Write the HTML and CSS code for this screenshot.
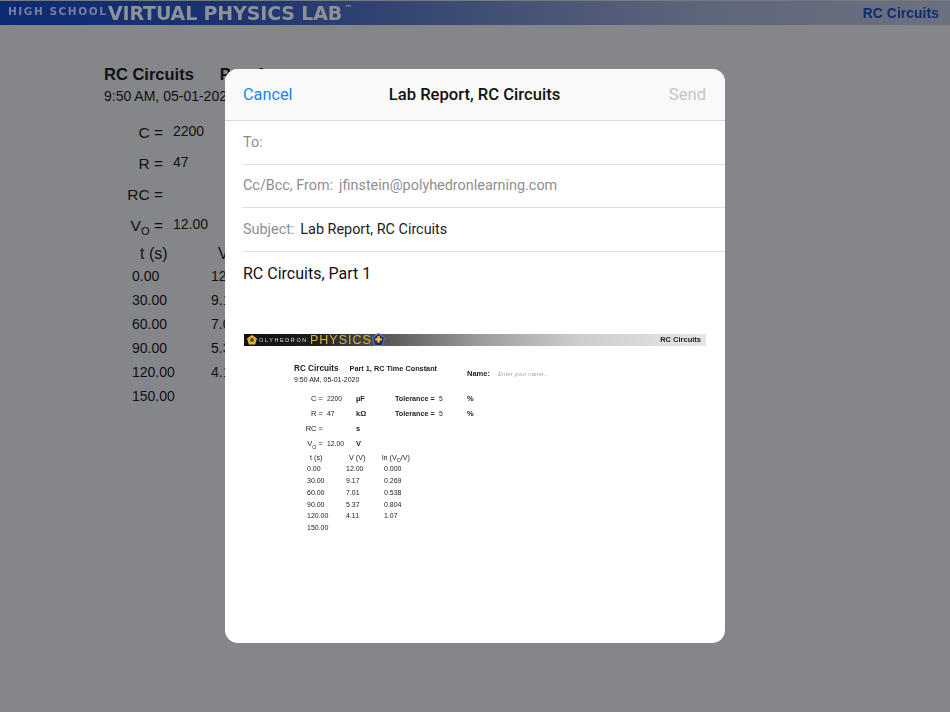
FILE: index.html
```html
<!DOCTYPE html>
<html lang="en">
<head>
  <meta charset="UTF-8" />
  <title>Lab Report, RC Circuits</title>
  <meta name="viewport" content="width=device-width, initial-scale=1.0" />
  <link rel="stylesheet" href="styles.css">
</head>
<body>
  <header class="topbar">
    <div class="brand">
      <span class="brand-small">HIGH SCHOOL</span>
      <span class="brand-big">VIRTUAL PHYSICS LAB</span><span class="brand-tm">™</span>
    </div>
    <div class="topbar-title">RC Circuits</div>
  </header>

  <!-- page behind the sheet -->
  <main class="page">
    <div class="page-title"><span>RC Circuits</span><span class="page-part">Part 1</span></div>
    <div class="page-date">9:50 AM, 05-01-2020</div>
    <div class="fields">
      <div class="f-row"><span class="f-label">C =</span><span class="f-value">2200</span></div>
      <div class="f-row"><span class="f-label">R =</span><span class="f-value">47</span></div>
      <div class="f-row"><span class="f-label">RC =</span><span class="f-value"></span></div>
      <div class="f-row"><span class="f-label">V<sub>O</sub> =</span><span class="f-value">12.00</span></div>
    </div>
    <div class="data">
      <div class="d-head"><span>t (s)</span><span>V (V)</span></div>
      <div class="d-row"><span>0.00</span><span>12.00</span></div>
      <div class="d-row"><span>30.00</span><span>9.17</span></div>
      <div class="d-row"><span>60.00</span><span>7.01</span></div>
      <div class="d-row"><span>90.00</span><span>5.37</span></div>
      <div class="d-row"><span>120.00</span><span>4.11</span></div>
      <div class="d-row"><span>150.00</span><span></span></div>
    </div>
  </main>

  <section class="sheet">
    <div class="nav">
      <span class="nav-side nav-cancel">Cancel</span>
      <span class="nav-title">Lab Report, RC Circuits</span>
      <span class="nav-side nav-send">Send</span>
    </div>
    <div class="mail-row"><span class="mail-label">To:</span></div>
    <div class="mail-row"><span class="mail-label">Cc/Bcc, From:</span><span>jfinstein@polyhedronlearning.com</span></div>
    <div class="mail-row"><span class="mail-label">Subject:</span><span class="mail-subject">Lab Report, RC Circuits</span></div>
    <div class="mail-body">RC Circuits, Part 1</div>

    <div class="banner">
      <svg class="banner-logo" width="10" height="10" viewBox="0 0 10 10"><polygon points="5,0 10,3.6 8.1,9.5 1.9,9.5 0,3.6" fill="#e3b23c"/><circle cx="5" cy="5" r="2" fill="#5b4413"/></svg>
      <span class="banner-poly">OLYHEDRON</span>
      <span class="banner-physics">PHYSICS</span>
      <svg class="banner-plus" width="13" height="13" viewBox="0 0 12 12"><polygon points="6,0.5 11.5,4.5 9.5,11.5 2.5,11.5 0.5,4.5" fill="#1d2a55" stroke="#5a78c8" stroke-width="1"/><path d="M6 2.8v6.2M2.9 5.9h6.2" stroke="#f2c230" stroke-width="2.2"/></svg>
      <span class="banner-title">RC Circuits</span>
    </div>

    <div class="mini">
      <div class="mini-head">
        <div class="mini-heading">
          <div class="mini-title"><b class="mini-name">RC Circuits</b><b>Part 1, RC Time Constant</b></div>
          <div class="mini-date">9:50 AM, 05-01-2020</div>
        </div>
        <div class="mini-student"><b>Name:</b><i>Enter your name...</i></div>
      </div>

      <div class="mini-fields">
        <span class="m-label">C =</span><span class="m-value">2200</span><span class="m-unit">µF</span><span class="m-tol">Tolerance =</span><span class="m-value">5</span><span class="m-unit">%</span>
        <span class="m-label">R =</span><span class="m-value">47</span><span class="m-unit">kΩ</span><span class="m-tol">Tolerance =</span><span class="m-value">5</span><span class="m-unit">%</span>
        <span class="m-label">RC =</span><span class="m-value"></span><span class="m-unit">s</span><span></span><span></span><span></span>
        <span class="m-label">V<sub>O</sub> =</span><span class="m-value">12.00</span><span class="m-unit">V</span><span></span><span></span><span></span>
      </div>

      <div class="mini-table">
        <b class="m-th">t (s)</b><b class="m-th">V (V)</b><b class="m-th m-th-ln">ln (V<sub>O</sub>/V)</b>
        <span>0.00</span><span>12.00</span><span>0.000</span>
        <span>30.00</span><span>9.17</span><span>0.269</span>
        <span>60.00</span><span>7.01</span><span>0.538</span>
        <span>90.00</span><span>5.37</span><span>0.804</span>
        <span>120.00</span><span>4.11</span><span>1.07</span>
        <span>150.00</span><span></span><span></span>
      </div>
    </div>
  </section>
</body>
</html>
```

FILE: styles.css
```css
html, body {
  margin: 0;
  padding: 0;
}
body {
  width: 950px;
  height: 712px;
  overflow: hidden;
  position: relative;
  background: #85868a;
  color: #111;
  font-family: "Liberation Sans", Arial, sans-serif;
}
sub {
  font-size: 0.72em;
  line-height: 0;
}

/* top bar */
.topbar {
  height: 25px;
  box-sizing: border-box;
  display: flex;
  justify-content: space-between;
  align-items: center;
  padding: 0 11px 0 8px;
  background: linear-gradient(90deg, #0d2a72 0%, #1c3470 25%, #3f4e74 50%, #5f677c 75%, #6c7180 100%);
  border-top: 1px solid #77797e;
}
.brand {
  display: flex;
  align-items: center;
  white-space: nowrap;
  color: #8e9197;
  font-family: "DejaVu Sans", sans-serif;
  font-weight: bold;
  filter: blur(0.3px);
}
.brand-small {
  font-size: 10.5px;
  letter-spacing: 1.55px;
  margin-top: -4px;
  color: #76809c;
  width: 100px;
}
.brand-big {
  font-size: 19px;
  letter-spacing: -0.15px;
  width: 237px;
}
.brand-tm {
  font-size: 7px;
  margin-top: -10px;
}
.topbar-title {
  font-size: 13.8px;
  font-weight: bold;
  color: #0e2b70;
  letter-spacing: 0.1px;
  filter: blur(0.2px);
}

/* page behind */
.page {
  padding: 39px 0 0 104px;
}
.page-title {
  display: flex;
  gap: 26px;
  font-size: 16.5px;
  line-height: 20px;
  font-weight: bold;
}
.page-date {
  font-size: 14px;
  line-height: 16px;
  margin-top: 4px;
}
.fields {
  margin-top: 16px;
}
.f-row {
  display: flex;
  height: 31px;
  align-items: flex-start;
}
.f-label {
  width: 59px;
  text-align: right;
  font-size: 15.5px;
  line-height: 24px;
  margin-top: 1px;
}
.f-value {
  margin-left: 10px;
  font-size: 14px;
  line-height: 20px;
  padding-top: 1px;
}
.data {
  margin-left: 28px;
  margin-top: 0;
}
.d-head, .d-row {
  display: grid;
  grid-template-columns: 79px 60px;
}
.d-head {
  font-size: 16px;
  line-height: 20px;
}
.d-head span:first-child {
  padding-left: 8px;
}
.d-head span:last-child {
  padding-left: 7px;
  white-space: nowrap;
}
.d-row {
  font-size: 14px;
  height: 24px;
  line-height: 24px;
}

/* mail sheet */
.sheet {
  position: absolute;
  left: 225px;
  top: 69px;
  width: 500px;
  height: 574px;
  background: #fff;
  border-radius: 13px;
  overflow: hidden;
  font-family: Roboto, "Liberation Sans", sans-serif;
}
.nav {
  height: 52px;
  box-sizing: border-box;
  display: flex;
  align-items: center;
  padding: 0 19px 0 18px;
  background: #f9f9f9;
  border-bottom: 1px solid #d8d8da;
  font-size: 16.6px;
}
.nav-side {
  flex: 1;
}
.nav-cancel {
  color: #1a82fb;
  font-size: 16.3px;
}
.nav-title {
  font-weight: 500;
  color: #111;
}
.nav-send {
  color: #c4c4c6;
  text-align: right;
}
.mail-row {
  height: 43.5px;
  box-sizing: border-box;
  display: flex;
  align-items: center;
  gap: 6px;
  margin-left: 18px;
  border-bottom: 1px solid #dcdcde;
  font-size: 14.4px;
  color: #8e8e92;
}
.mail-subject {
  color: #222;
}
.mail-body {
  margin: 12px 0 0 18px;
  font-size: 16px;
  line-height: 20px;
  color: #111;
}

/* pdf preview */
.banner {
  display: flex;
  align-items: center;
  height: 12px;
  margin: 50px 19px 0 19px;
  padding-left: 3px;
  background: linear-gradient(90deg, #111 0%, #1c1c1c 15%, #555 30%, #999 50%, #ccc 72%, #e6e6e6 100%);
  font-family: "Liberation Sans", sans-serif;
  filter: blur(0.3px);
}
.banner-poly {
  margin-left: 2px;
  font-size: 5.5px;
  letter-spacing: 1.6px;
  color: #ddd;
  width: 51px;
}
.banner-physics {
  font-size: 12.5px;
  letter-spacing: 1px;
  color: #d9b23f;
  margin-right: 2px;
  width: 60px;
}
.banner-title {
  margin-left: auto;
  margin-right: 5px;
  font-size: 7.5px;
  font-weight: bold;
  color: #222;
}
.mini {
  padding: 18px 0 0 69px;
  font-family: "Liberation Sans", sans-serif;
  font-size: 7px;
  color: #222;
  filter: blur(0.25px);
}
.mini-head {
  display: flex;
}
.mini-heading {
  width: 173px;
}
.mini-title {
  display: flex;
  gap: 11px;
  align-items: baseline;
  font-size: 7.3px;
  line-height: 10px;
}
.mini-name {
  font-size: 8.2px;
}
.mini-date {
  margin-top: 1px;
  line-height: 10px;
  font-size: 7px;
}
.mini-student {
  display: flex;
  gap: 8px;
  align-items: baseline;
  padding-top: 5px;
  font-size: 7.5px;
}
.mini-student i {
  font-size: 6.2px;
  color: #aaa;
}
.mini-fields {
  display: grid;
  grid-template-columns: 29px 33px 39px 40px 32px 20px;
  grid-auto-rows: 15px;
  margin: 6px 0 0 0;
  align-items: center;
  font-size: 7.5px;
}
.m-label {
  text-align: right;
  font-size: 7.5px;
  white-space: nowrap;
}
.m-value {
  padding-left: 4px;
  font-size: 6.8px;
}
.m-unit {
  font-weight: bold;
  font-size: 7.5px;
  margin-top: 1px;
}
.m-tol {
  font-weight: bold;
  white-space: nowrap;
  font-size: 7.2px;
}
.mini-table {
  display: grid;
  grid-template-columns: 39px 38px 40px;
  grid-auto-rows: 11.8px;
  margin: 1px 0 0 13px;
  line-height: 11.8px;
  font-size: 7px;
}
.m-th {
  font-size: 7.2px;
  font-weight: normal;
  white-space: nowrap;
  padding-left: 3px;
}
.m-th-ln {
  padding-left: 0;
  margin-left: -2px;
}
```
